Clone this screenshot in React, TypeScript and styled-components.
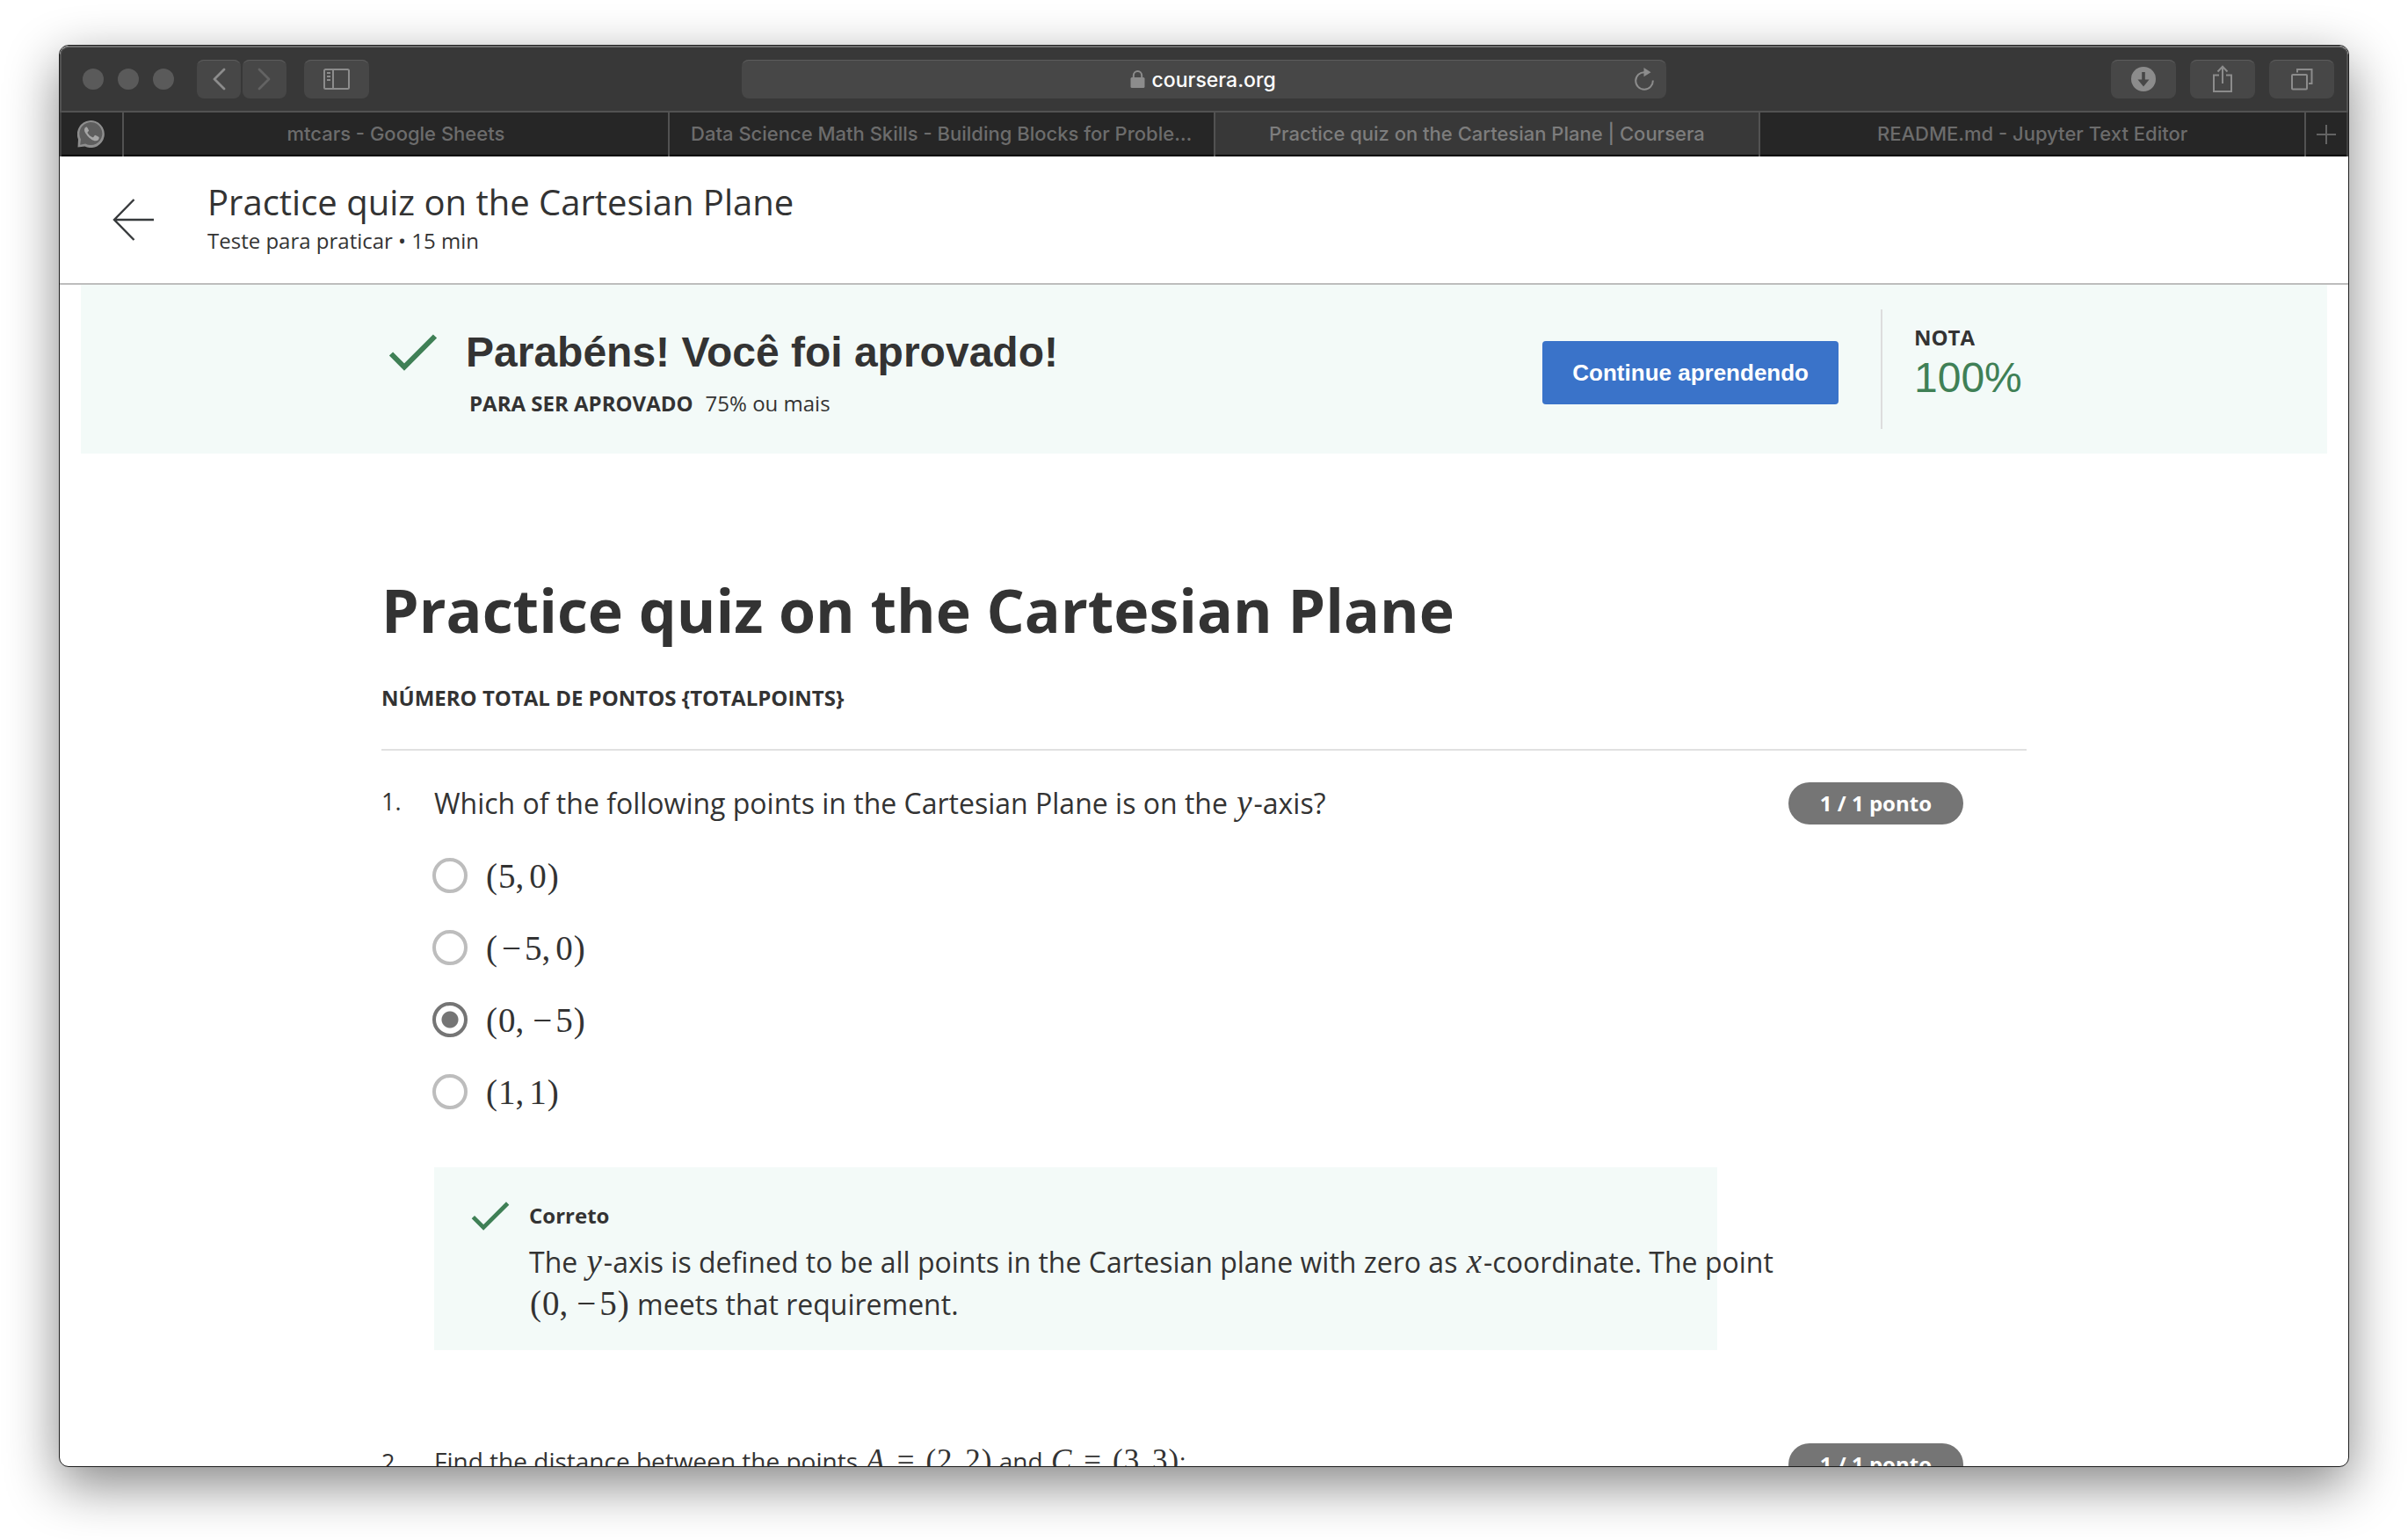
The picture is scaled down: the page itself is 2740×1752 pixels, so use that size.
import React from "react";
import styled, { createGlobalStyle, css } from "styled-components";

const ui = `Inter, "Liberation Sans", sans-serif`;
const body = `"Open Sans", "Noto Sans", sans-serif`;
const helvetica = `"Liberation Sans", Arial, sans-serif`;
const serif = `"Liberation Serif", "Times New Roman", serif`;

const color = {
  text: "#333333",
  green: "#3f8056",
  mint: "#f3faf8",
  blue: "#3a73c9",
  grey: "#757575",
  ring: "#bdbdbd",
  bar: "#383838",
  control: "#474747",
  glyph: "#8c8c8c",
  tab: "#262626",
  tabLine: "#525252",
};

const Global = createGlobalStyle`
  *, *::before, *::after { box-sizing: border-box; }
  body { margin: 0; background: #ffffff; color: ${color.text}; font-family: ${body}; }
  h1, h2, p, ol, fieldset, legend { margin: 0; padding: 0; border: 0; }
  button { font: inherit; cursor: pointer; }
`;

const Desktop = styled.div`
  height: 100vh;
  padding: 51px 67px 83px;
`;

const Window = styled.div`
  display: flex;
  flex-direction: column;
  height: 100%;
  overflow: hidden;
  background: #ffffff;
  border: 1px solid #1f1f1f;
  border-radius: 11px;
  box-shadow: 0 20px 60px rgba(0, 0, 0, 0.48);
`;

/* Browser chrome */

const Toolbar = styled.div`
  display: flex;
  align-items: center;
  flex: none;
  height: 76px;
  padding: 0 14px;
  background: ${color.bar};
  border: 2px solid ${color.tabLine};
  border-top-color: #6e6e6e;
  border-radius: 10px 10px 0 0;
`;

const ToolbarSide = styled.div<{ $end?: boolean }>`
  display: flex;
  flex: 1;
  align-items: center;
  justify-content: ${(p) => (p.$end ? "flex-end" : "flex-start")};
  gap: ${(p) => (p.$end ? 16 : 20)}px;
`;

const Lights = styled.div`
  display: flex;
  gap: 16px;
  padding: 0 6px 0 10px;
`;

const Light = styled.span`
  width: 24px;
  height: 24px;
  border-radius: 50%;
  background: #5a5a5a;
`;

const NavPair = styled.div`
  display: flex;
  gap: 2px;
`;

const controlSurface = css`
  background: ${color.control};
  border: 0;
  border-radius: 8px;
  box-shadow: inset 0 2px 0 -1px #5c5c5c;
`;

const ToolButton = styled.button<{ $narrow?: boolean }>`
  ${controlSurface}
  display: grid;
  place-items: center;
  width: ${(p) => (p.$narrow ? 50 : 74)}px;
  height: 44px;
  padding: 0;
  color: ${color.glyph};

  &:disabled {
    color: #636363;
  }
`;

const AddressBar = styled.div`
  ${controlSurface}
  display: grid;
  grid-template-columns: 1fr auto 1fr;
  align-items: center;
  flex: 0 1 1052px;
  height: 44px;
  padding: 0 14px;
  color: ${color.glyph};
`;

const Address = styled.label`
  display: flex;
  grid-column: 2;
  align-items: center;
  gap: 8px;
`;

const AddressInput = styled.input`
  width: 144px;
  padding: 2px 0 0;
  border: 0;
  outline: 0;
  background: transparent;
  color: #ffffff;
  font: 500 23px/32px ${ui};
`;

const Reload = styled.button`
  display: grid;
  justify-self: end;
  padding: 0;
  border: 0;
  background: none;
  color: ${color.glyph};
`;

const TabStrip = styled.nav`
  display: flex;
  flex: none;
  height: 50px;
  background: ${color.tab};
  border: solid #404040;
  border-width: 0 2px;
  box-shadow: inset 0 -2px 0 #000000;
`;

const Tab = styled.button<{ $active?: boolean }>`
  flex: 1;
  min-width: 0;
  padding: 0 24px 2px;
  overflow: hidden;
  border: 0;
  border-left: 2px solid ${color.tabLine};
  background: ${(p) => (p.$active ? color.bar : "transparent")};
  box-shadow: inset 0 -2px 0 #000000;
  color: ${(p) => (p.$active ? "#7d7d7d" : "#6c6c6c")};
  font: 500 22px/28px ${ui};
  text-overflow: ellipsis;
  white-space: nowrap;
`;

const PinnedTab = styled.button`
  display: grid;
  place-items: center;
  width: 69px;
  padding: 0 2px 2px 0;
  border: 0;
  background: none;
`;

const NewTab = styled.button`
  display: grid;
  place-items: center;
  width: 48px;
  padding: 0;
  border: 0;
  border-left: 2px solid ${color.tabLine};
  background: none;
  color: #636363;
`;

/* Course page */

const Page = styled.div`
  display: flex;
  flex: 1;
  flex-direction: column;
  min-height: 0;
`;

const Header = styled.header`
  display: flex;
  align-items: center;
  flex: none;
  gap: 60px;
  height: 146px;
  padding: 0 60px;
  border-bottom: 2px solid ${color.ring};
`;

const BackLink = styled.a`
  display: grid;
  color: #373a3c;
`;

const HeaderText = styled.div`
  display: grid;
  gap: 4px;
`;

const HeaderTitle = styled.p`
  font-size: 40px;
  line-height: 44px;
`;

const HeaderMeta = styled.p`
  font-size: 24px;
  line-height: 36px;
`;

const Scroller = styled.main`
  flex: 1;
  min-height: 0;
  padding: 0 24px;
  overflow: hidden;
`;

const Column = styled.div`
  max-width: 1872px;
  margin: 0 auto;
`;

const Banner = styled.section`
  padding: 28px 0;
  background: ${color.mint};
`;

const BannerRow = styled(Column)`
  display: flex;
  align-items: center;
`;

const Verdict = styled.div`
  display: grid;
  flex: 1;
  grid-template-columns: 56px 1fr;
  align-items: center;
  column-gap: 32px;
  row-gap: 10px;
  padding: 8px 0 0 8px;
`;

const VerdictTitle = styled.h2`
  font: 700 48px/60px ${helvetica};
`;

const VerdictNote = styled.p`
  grid-column: 2;
  padding-left: 4px;
  font-size: 24px;
  line-height: 36px;

  strong {
    margin-right: 14px;
  }
`;

const ContinueButton = styled.button`
  height: 72px;
  margin-top: 8px;
  padding: 0 34px;
  border: 0;
  border-radius: 4px;
  background: ${color.blue};
  color: #ffffff;
  font: 700 26px/36px ${helvetica};
`;

const Grade = styled.div`
  width: 166px;
  height: 136px;
  margin-left: 48px;
  padding: 14px 0 0 36px;
  border-left: 2px solid #dddddd;
`;

const GradeLabel = styled.p`
  font-size: 24px;
  font-weight: 700;
  line-height: 36px;
`;

const GradeValue = styled.p`
  color: ${color.green};
  font: 48px/56px ${helvetica};
`;

const QuizTitle = styled.h1`
  padding-top: 130px;
  font-size: 68px;
  line-height: 96px;
`;

const Points = styled.p`
  padding: 34px 0 40px;
  border-bottom: 2px solid #e1e1e1;
  font-size: 24px;
  font-weight: 700;
  line-height: 36px;
`;

const Formula = styled.span`
  font: 39px/40px ${serif};
  white-space: nowrap;
`;

const Variable = styled.i`
  margin: 0 2px;
  font: italic 39px/40px ${serif};
`;

const Operator = styled.span<{ $relation?: boolean }>`
  margin: 0 ${(p) => (p.$relation ? 12 : 4)}px;
`;

const Paren = styled.span`
  margin: 0 1px;
`;

const Comma = styled.span`
  margin-right: 6px;
`;

const Questions = styled.ol`
  list-style: none;
`;

const Question = styled.li`
  display: grid;
  grid-template-columns: 60px 1fr auto;
  align-items: start;
  padding: 36px 72px 70px 0;
`;

const Num = styled.span`
  font-size: 27px;
  line-height: 44px;
`;

const Prompt = styled.p<{ $small?: boolean }>`
  font-size: ${(p) => (p.$small ? 28 : 32)}px;
  line-height: ${(p) => (p.$small ? 40 : 48)}px;

  ${Formula}, ${Variable} {
    font-size: ${(p) => (p.$small ? 35 : 39)}px;
  }
`;

const Badge = styled.span`
  padding: 0 36px;
  border-radius: 24px;
  background: ${color.grey};
  color: #ffffff;
  font-size: 24px;
  font-weight: 700;
  line-height: 48px;
`;

const Choices = styled.fieldset`
  display: grid;
  grid-column: 2;
  gap: 34px;
  padding-top: 34px;
`;

const Choice = styled.label`
  display: flex;
  align-items: center;
  gap: 20px;
  height: 48px;

  ${Formula} {
    padding-top: 2px;
  }
`;

const Radio = styled.input`
  width: 40px;
  height: 40px;
  margin: 0 0 0 -2px;
  appearance: none;
  border: 4px solid ${color.ring};
  border-radius: 50%;

  &:checked {
    border-color: ${color.grey};
    background: radial-gradient(circle, ${color.grey} 9px, transparent 10px);
  }
`;

const Feedback = styled.div`
  display: grid;
  grid-column: 2;
  grid-template-columns: 44px 1fr;
  align-items: center;
  gap: 10px 22px;
  width: 1460px;
  max-width: 100%;
  margin-top: 62px;
  padding: 36px 0 28px 42px;
  background: ${color.mint};
`;

const FeedbackTitle = styled.p`
  font-size: 24px;
  font-weight: 700;
  line-height: 38px;
`;

const FeedbackText = styled.p`
  grid-column: 2;
  margin-right: -80px;
  font-size: 32px;
  line-height: 48px;
`;

/* Icons */

const ChevronIcon = ({ right }: { right?: boolean }) => (
  <svg width="16" height="28" viewBox="0 0 16 28" fill="none" stroke="currentColor" strokeWidth="2.8" strokeLinecap="round" strokeLinejoin="round">
    <path d={right ? "M2 3l11 11L2 25" : "M14 3L3 14l11 11"} />
  </svg>
);

const SidebarIcon = () => (
  <svg width="30" height="24" viewBox="0 0 30 24" fill="none" stroke="currentColor" strokeWidth="2">
    <rect x="1" y="1" width="28" height="22" rx="1.5" />
    <path d="M11 1v22M4 5h4M4 9h4M4 13h4" />
  </svg>
);

const LockIcon = () => (
  <svg width="17" height="20" viewBox="0 0 17 20" fill="none">
    <rect x="0.5" y="8" width="16" height="12" rx="1.5" fill="currentColor" />
    <path d="M3.8 9V6a4.7 4.9 0 0 1 9.4 0v3" stroke="currentColor" strokeWidth="2" />
  </svg>
);

const ReloadIcon = () => (
  <svg width="22" height="26" viewBox="0 0 22 26" fill="none">
    <path d="M11.5 5.2A9.8 9.8 0 1 0 20.8 14.5" stroke="currentColor" strokeWidth="2" />
    <path d="M10.5 0l8 5.2-8 5z" fill="currentColor" />
  </svg>
);

const DownloadIcon = () => (
  <svg width="28" height="28" viewBox="0 0 28 28">
    <circle cx="14" cy="14" r="14" fill="currentColor" />
    <path d="M12.2 6h3.6v8.5h4.7L14 22.5l-6.5-8h4.7z" fill={color.control} />
  </svg>
);

const ShareIcon = () => (
  <svg width="24" height="32" viewBox="0 0 24 32" fill="none" stroke="currentColor" strokeWidth="2">
    <path d="M8 11.5H2V30h20V11.5h-6M12 21V2M6.5 7.5L12 1.8l5.5 5.7" />
  </svg>
);

const TabsIcon = () => (
  <svg width="26" height="26" viewBox="0 0 26 26" fill="none" stroke="currentColor" strokeWidth="2">
    <rect x="2" y="8" width="17" height="16.5" rx="1" />
    <path d="M8 5.5V2h16.5V18H21" />
  </svg>
);

const PlusIcon = () => (
  <svg width="22" height="22" viewBox="0 0 22 22" fill="none" stroke="currentColor" strokeWidth="2">
    <path d="M11 0v22M0 11h22" />
  </svg>
);

const WhatsAppIcon = () => (
  <svg width="32" height="32" viewBox="0 0 32 32">
    <path d="M.5 31.5l.5-9A15.5 15.5 0 1 1 8.500 30.500z" fill="#8e8e8e" />
    <path d="M3.2 28.8l.8-6.4A13 13 0 1 1 9.2 27.500z" fill="#5e5e5e" />
    <path d="M11.4 9.3c-.4-.8-.8-.8-1.200-.8-.8 0-2.200 1.200-2.200 3.300 0 2.200 1.700 4.500 2 4.800.3.400 3.400 5.400 8.300 7.200 4.100 1.600 6-.8 6.300-2.100.2-1.100.1-1.800-.2-2-.4-.3-3.200-1.800-3.800-1.800-.5-.1-.7.1-1 .4l-1.300 1.700c-.3.400-.6.400-1 .2-2.500-1-4.400-2.700-5.700-4.900-.3-.5 0-.7.200-1l1.100-1.400c.2-.4.200-.6 0-1z" fill="#a6a6a6" />
  </svg>
);

const ArrowIcon = () => (
  <svg width="48" height="48" viewBox="0 0 48 48" fill="none" stroke="currentColor" strokeWidth="2.4">
    <path d="M24.5 1L2 24l22.500 23M2 24h45" />
  </svg>
);

const CheckIcon = ({ width, height }: { width: number; height: number }) => (
  <svg width={width} height={height} viewBox="0 0 56 42" fill="none" stroke={color.green} strokeWidth="6">
    <path d="M3 22.500L18 37.500L53 2.500" />
  </svg>
);

/* Math */

const Minus = () => <Operator>−</Operator>;

const PointBody = ({ x, y }: { x: number; y: number }) => (
  <>
    <Paren>(</Paren>
    {x < 0 && <Minus />}
    {Math.abs(x)}
    <Comma>,</Comma>
    {y < 0 && <Minus />}
    {Math.abs(y)}
    <Paren>)</Paren>
  </>
);

const Point = ({ x, y }: { x: number; y: number }) => (
  <Formula>
    <PointBody x={x} y={y} />
  </Formula>
);

const NamedPoint = ({ name, x, y }: { name: string; x: number; y: number }) => (
  <Formula>
    <Variable>{name}</Variable>
    <Operator $relation>=</Operator>
    <PointBody x={x} y={y} />
  </Formula>
);

const choices = [
  { x: 5, y: 0 },
  { x: -5, y: 0 },
  { x: 0, y: -5 },
  { x: 1, y: 1 },
];

const tabs = [
  "mtcars - Google Sheets",
  "Data Science Math Skills - Building Blocks for Proble…",
  "Practice quiz on the Cartesian Plane | Coursera",
  "README.md - Jupyter Text Editor",
];

export default function App() {
  const [selected, setSelected] = React.useState(2);
  const [address, setAddress] = React.useState("coursera.org");

  return (
    <Desktop>
      <Global />
      <Window>
        <Toolbar>
          <ToolbarSide>
            <Lights>
              <Light />
              <Light />
              <Light />
            </Lights>
            <NavPair>
              <ToolButton $narrow aria-label="Back"><ChevronIcon /></ToolButton>
              <ToolButton $narrow disabled aria-label="Forward"><ChevronIcon right /></ToolButton>
            </NavPair>
            <ToolButton aria-label="Sidebar"><SidebarIcon /></ToolButton>
          </ToolbarSide>
          <AddressBar>
            <Address>
              <LockIcon />
              <AddressInput aria-label="Address" value={address} onChange={(e) => setAddress(e.target.value)} />
            </Address>
            <Reload aria-label="Reload"><ReloadIcon /></Reload>
          </AddressBar>
          <ToolbarSide $end>
            <ToolButton aria-label="Downloads"><DownloadIcon /></ToolButton>
            <ToolButton aria-label="Share"><ShareIcon /></ToolButton>
            <ToolButton aria-label="Show tabs"><TabsIcon /></ToolButton>
          </ToolbarSide>
        </Toolbar>
        <TabStrip>
          <PinnedTab aria-label="WhatsApp"><WhatsAppIcon /></PinnedTab>
          {tabs.map((title, i) => (
            <Tab key={title} $active={i === 2}>{title}</Tab>
          ))}
          <NewTab aria-label="New tab"><PlusIcon /></NewTab>
        </TabStrip>

        <Page>
          <Header>
            <BackLink href="#" aria-label="Voltar"><ArrowIcon /></BackLink>
            <HeaderText>
              <HeaderTitle>Practice quiz on the Cartesian Plane</HeaderTitle>
              <HeaderMeta>Teste para praticar • 15 min</HeaderMeta>
            </HeaderText>
          </Header>
          <Scroller>
            <Banner>
              <BannerRow>
                <Verdict>
                  <CheckIcon width={56} height={42} />
                  <VerdictTitle>Parabéns! Você foi aprovado!</VerdictTitle>
                  <VerdictNote>
                    <strong>PARA SER APROVADO</strong>75% ou mais
                  </VerdictNote>
                </Verdict>
                <ContinueButton>Continue aprendendo</ContinueButton>
                <Grade>
                  <GradeLabel>NOTA</GradeLabel>
                  <GradeValue>100%</GradeValue>
                </Grade>
              </BannerRow>
            </Banner>
            <Column>
              <QuizTitle>Practice quiz on the Cartesian Plane</QuizTitle>
              <Points>NÚMERO TOTAL DE PONTOS {"{TOTALPOINTS}"}</Points>
              <Questions>
                <Question>
                  <Num>1.</Num>
                  <Prompt>
                    Which of the following points in the Cartesian Plane is on the <Variable>y</Variable>-axis?
                  </Prompt>
                  <Badge>1 / 1 ponto</Badge>
                  <Choices>
                    {choices.map((c, i) => (
                      <Choice key={i}>
                        <Radio type="radio" name="q1" checked={selected === i} onChange={() => setSelected(i)} />
                        <Point x={c.x} y={c.y} />
                      </Choice>
                    ))}
                  </Choices>
                  <Feedback>
                    <CheckIcon width={44} height={33} />
                    <FeedbackTitle>Correto</FeedbackTitle>
                    <FeedbackText>
                      The <Variable>y</Variable>-axis is defined to be all points in the Cartesian plane with zero as{" "}
                      <Variable>x</Variable>-coordinate. The point <Point x={0} y={-5} /> meets that requirement.
                    </FeedbackText>
                  </Feedback>
                </Question>
                <Question>
                  <Num>2.</Num>
                  <Prompt $small>
                    Find the distance between the points <NamedPoint name="A" x={2} y={2} /> and{" "}
                    <NamedPoint name="C" x={3} y={3} />:
                  </Prompt>
                  <Badge>1 / 1 ponto</Badge>
                </Question>
              </Questions>
            </Column>
          </Scroller>
        </Page>
      </Window>
    </Desktop>
  );
}
